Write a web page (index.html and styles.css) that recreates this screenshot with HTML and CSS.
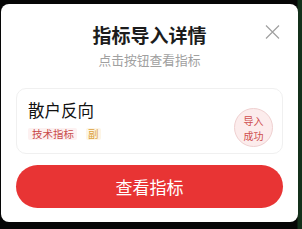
FILE: index.html
```html
<!DOCTYPE html>
<html lang="zh">
<head>
<meta charset="utf-8">
<link rel="stylesheet" href="styles.css">
</head>
<body>
<div class="modal">
  <div class="close">
    <svg width="15" height="14" viewBox="0 0 15 14"><path d="M1 0.5 L14 13.5 M14 0.5 L1 13.5" stroke="#a0a0a0" stroke-width="1.2" fill="none"/></svg>
  </div>
  <div class="title">指标导入详情</div>
  <div class="subtitle">点击按钮查看指标</div>
  <div class="card">
    <div class="info">
      <div class="name">散户反向</div>
      <div class="tags">
        <span class="tag tag-red">技术指标</span>
        <span class="tag tag-amber">副</span>
      </div>
    </div>
    <div class="badge">
      <span class="badge-line">导入</span>
      <span class="badge-line">成功</span>
    </div>
  </div>
  <div class="button">查看指标</div>
</div>
</body>
</html>
```

FILE: styles.css
```css
html, body {
  margin: 0;
  padding: 0;
}
body {
  width: 302px;
  height: 229px;
  background: linear-gradient(to right, #060606 0, #060606 297px, #13301a 298px, #13301a 302px);
  font-family: "Noto Sans CJK SC", "Noto Sans", sans-serif;
  overflow: hidden;
  padding-top: 4px;
  box-sizing: border-box;
}
.modal {
  position: relative;
  margin-left: 1px;
  width: 297px;
  background: #fff;
  border-radius: 8px;
  padding: 18px 15px 14px;
  box-sizing: border-box;
  display: flex;
  flex-direction: column;
}
.close {
  position: absolute;
  top: 21px;
  right: 18px;
  width: 15px;
  height: 14px;
  display: flex;
}
.title {
  text-align: center;
  font-size: 19px;
  line-height: 26px;
  font-weight: 700;
  color: #1c1c1c;
}
.subtitle {
  margin-top: 3px;
  text-align: center;
  font-size: 12.75px;
  line-height: 18px;
  color: #a0a0a0;
}
.card {
  margin-top: 19px;
  height: 66px;
  box-sizing: border-box;
  border: 1px solid #f0f0f0;
  border-radius: 10px;
  padding: 11px 9px 13px 11px;
  display: flex;
  align-items: flex-start;
  justify-content: space-between;
}
.info {
  display: flex;
  flex-direction: column;
  gap: 8px;
}
.name {
  font-size: 16.5px;
  line-height: 20px;
  color: #111;
}
.tags {
  display: flex;
  gap: 9px;
}
.tag {
  font-size: 10.5px;
  line-height: 12px;
  height: 12px;
  border-radius: 2px;
}
.tag-red {
  color: #c94a4a;
  background: #fdf1f1;
  padding: 0 3px 0 4px;
}
.tag-amber {
  color: #dca23c;
  background: #fdf5e6;
  padding: 0 2px;
}
.badge {
  margin-top: 8px;
  width: 39px;
  height: 39px;
  box-sizing: border-box;
  border-radius: 50%;
  background: #fcecec;
  border: 1px solid #efd0d0;
  color: #cf4e4e;
  display: flex;
  flex-direction: column;
  align-items: center;
  justify-content: center;
}
.badge-line {
  font-size: 10px;
  line-height: 15px;
  height: 15px;
}
.button {
  margin-top: 11px;
  height: 43px;
  border-radius: 22px;
  background: #e83434;
  color: #fff;
  font-size: 17px;
  display: flex;
  align-items: center;
  justify-content: center;
}
```
